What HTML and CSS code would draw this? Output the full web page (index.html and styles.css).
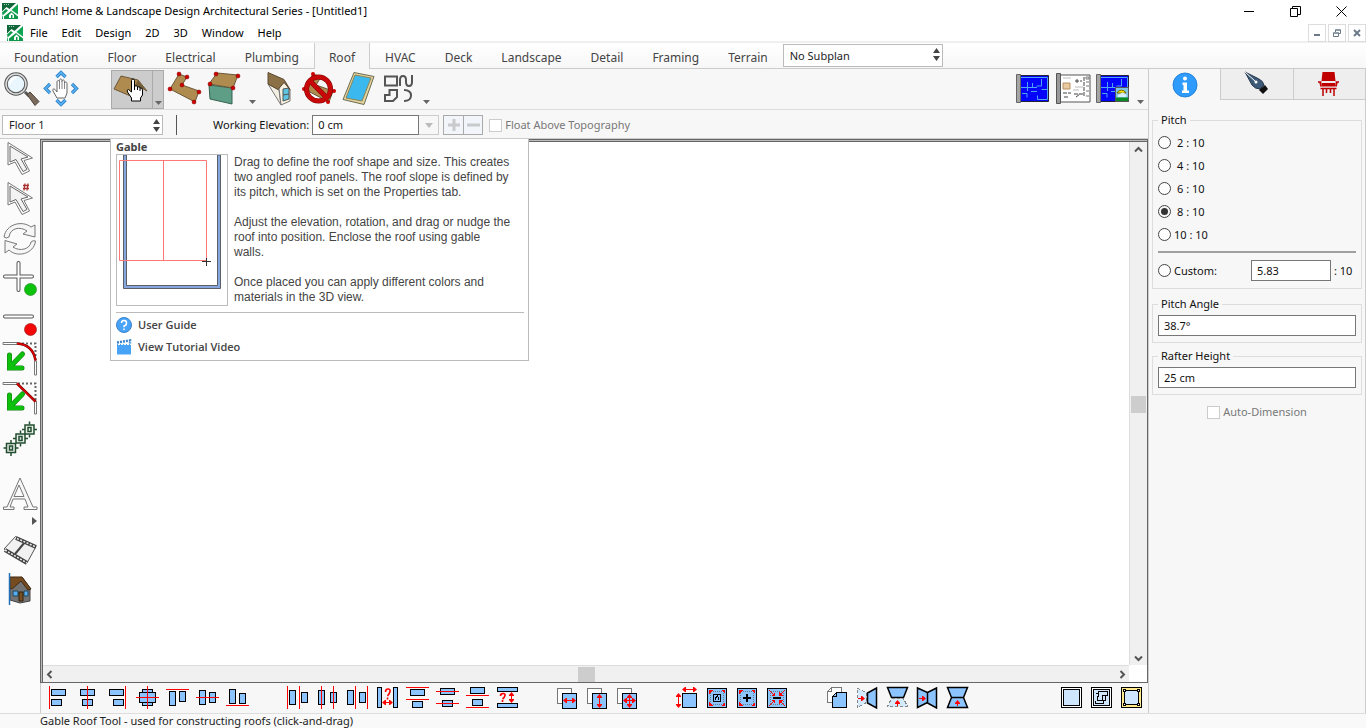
FILE: index.html
```html
<!DOCTYPE html>
<html lang="en">
<head>
<meta charset="utf-8">
<title>Punch! Home &amp; Landscape Design Architectural Series - [Untitled1]</title>
<link rel="stylesheet" href="styles.css">
</head>
<body>
<svg class="defs" aria-hidden="true">
  <symbol id="logo" viewBox="0 0 16 16"><rect width="16" height="16" fill="#fff"/><path d="M0 0h14L7.500 6 4.500 4 0 8.500z" fill="#11663a"/><path d="M2 1.500h6" stroke="#9fd0b4" stroke-dasharray="1 1"/><path d="M16 1v10.500L9.500 7z" fill="#0da552"/><path d="M2 16v-2.500L9 8l7 5.500V16z" fill="#0c9a4a"/><path d="M0 8.500V16h1L0 8.500zM0 9.500L4 6l2 1.500L0 13z" fill="#0c9a4a"/><path d="M7 15v-3l2.500-2.500L12 12v3z" fill="#fff"/><rect x="9" y="12" width="1.500" height="3" fill="#0c9a4a"/></symbol>
  <symbol id="updown" viewBox="0 0 7 13"><path d="M0 5l3.500-5L7 5zM0 8l3.500 5L7 8z" fill="#444"/></symbol>
  <symbol id="caret" viewBox="0 0 7 4"><path d="M0 0h7L3.500 4z" fill="#666"/></symbol>
  <symbol id="blueprint" viewBox="0 0 40 40"><path d="M7.500 6.500h28v26h-28z" fill="#0404fa" stroke="#223" stroke-width="1"/><path d="M8 8.500h26.500v22h-10v-4M8 18.500h16M14.500 13v9M19.500 18v-4M9 24.500h5v4M28.500 10v7h-5M28.500 20.500h6M18 22.500h6" fill="none" stroke="#4fa4f0" stroke-width="1"/><path d="M3.500 5.500h4v28h-4z" fill="#a5a5a5" stroke="#666"/></symbol>
  <symbol id="cursor" viewBox="0 0 40 40"><path d="M8 2.500V25l7-3 7 12.500 7.500-3.500-5.500-10.500 8.500-2.500z" fill="#fff" stroke="#777"/><path d="M10 6v16l6-2.500 7 12 4-2-6-10.500 7-2z" fill="#f3f3f3" stroke="#666"/></symbol>
  <marker id="arrow" viewBox="0 0 4 5" markerWidth="4" markerHeight="5" refX="3" refY="2.500" orient="auto-start-reverse" markerUnits="userSpaceOnUse"><path d="M0 0h1l3 2.500L1 5H0z" fill="#f00"/></marker>
</svg>

<header class="titlebar">
  <svg class="logo"><use href="#logo"/></svg>
  <h1>Punch! Home &amp; Landscape Design Architectural Series - [Untitled1]</h1>
  <div class="window-buttons">
    <button aria-label="Minimize"><svg width="11" height="11"><path d="M0 5.500h10" stroke="#000"/></svg></button>
    <button aria-label="Restore"><svg width="11" height="11"><path d="M.5 2.500h7v8h-7zM2.500 2.500v-2h8v8h-3" fill="none" stroke="#000"/></svg></button>
    <button aria-label="Close"><svg width="11" height="11"><path d="M.5.5l10 10M10.500.5l-10 10" stroke="#000"/></svg></button>
  </div>
</header>

<nav class="menubar">
  <svg class="logo"><use href="#logo"/></svg>
  <button>File</button><button>Edit</button><button>Design</button><button>2D</button><button>3D</button><button>Window</button><button>Help</button>
  <div class="doc-buttons">
    <button aria-label="Minimize document"><svg width="8" height="8"><path d="M1 6h6" stroke="#6c7a89" stroke-width="2"/></svg></button>
    <button aria-label="Restore document"><svg width="8" height="8"><path d="M.5 4h5v3.500h-5zM2.500 3V1h5v3.500h-2" fill="none" stroke="#6c7a89"/><path d="M0 4h6M2 1h6" stroke="#6c7a89"/></svg></button>
    <button aria-label="Close document"><svg width="8" height="8"><path d="M1 1l6 6M7 1L1 7" stroke="#6c7a89" stroke-width="2"/></svg></button>
  </div>
</nav>

<nav class="tabs">
  <button>Foundation</button><button>Floor</button><button>Electrical</button><button>Plumbing</button><button class="active">Roof</button><button>HVAC</button><button>Deck</button><button>Landscape</button><button>Detail</button><button>Framing</button><button>Terrain</button>
  <div class="select subplan"><select aria-label="Subplan"><option>No Subplan</option></select><svg><use href="#updown"/></svg></div>
</nav>

<div class="body">
<main class="left">
  <div class="toolbar">
    <button class="tool" aria-label="Zoom"><svg viewBox="0 0 40 40"><path d="M24 23l4 4" stroke="#555" stroke-width="3"/><path d="M26 25.500l3-2.500 9 9.500-4 4z" fill="#7b6b5d" stroke="#4c4037"/><circle cx="15" cy="15" r="10" fill="#eaf6fd" stroke="#555" stroke-width="3.500"/><circle cx="15" cy="15" r="10" fill="none" stroke="#ddd" stroke-width="1.500"/><path d="M9 15a6 6 0 0 1 6-6" fill="none" stroke="#fff" stroke-width="2"/></svg></button>
    <button class="tool" aria-label="Pan"><svg viewBox="0 0 40 40"><path d="M15.500 8l4.500-4.500L24.500 8M15.500 31l4.500 4.500 4.500-4.500M9 15l-4.500 4.500L9 24M31 15l4.500 4.500L31 24" fill="none" stroke="#2a7cc4" stroke-width="3.200"/><path d="M15.500 8l4.500-4.500L24.500 8M15.500 31l4.500 4.500 4.500-4.500M9 15l-4.500 4.500L9 24M31 15l4.500 4.500L31 24" fill="none" stroke="#5ab4f4" stroke-width="1.600"/><path d="M16 29l-4-7c-1-2 1-3 2.500-1l1.500 2V13c0-2 2.500-2 2.500 0v-1.500c0-2 2.500-2 2.500 0v1c0-2 2.500-2 2.500 0v2c0-2 2.500-2 2.500 0V24l-2 5z" fill="#fff" stroke="#666"/><path d="M18.500 13v7M21 12v8M23.500 14v6" stroke="#888"/></svg></button>
    <div class="split">
      <button class="tool" aria-label="Gable Roof Tool" aria-pressed="true"><svg viewBox="0 0 40 40"><path d="M2 20L9 7l17 4 9 11-5-3-9 9z" fill="#af8b50" stroke="#6b5838"/><path d="M26 11l-6 11 9-3 6 3z" fill="#75603a"/></svg></button>
      <button class="drop" aria-label="Roof tools"><svg><use href="#caret"/></svg></button>
    </div>
    <button class="tool" aria-label="Roof by boundary"><svg viewBox="0 0 40 40"><path d="M14 5l8 3-5 8 17 6-4 11L5 20z" fill="#af8b50" stroke="#6b5838"/><g fill="#c00" stroke="#800" stroke-width=".5"><circle cx="14" cy="5" r="2"/><circle cx="22" cy="8" r="2"/><circle cx="17" cy="16" r="2"/><circle cx="34" cy="23" r="2"/><circle cx="29" cy="33" r="2"/><circle cx="5" cy="20" r="2"/></g></svg></button>
    <button class="tool" aria-label="Roof plane"><svg viewBox="0 0 40 40"><path d="M4 16l23 3v16L5 30z" fill="#5e9d86" stroke="#356453"/><path d="M12 4l21 2-5 13-24-4z" fill="#af8b50" stroke="#6b5838"/><g fill="#c00" stroke="#800" stroke-width=".5"><circle cx="11" cy="5" r="2"/><circle cx="33" cy="7" r="2"/><circle cx="28" cy="19" r="2"/><circle cx="5" cy="15" r="2"/></g></svg></button>
    <button class="drop" aria-label="More roof tools"><svg><use href="#caret"/></svg></button>
    <button class="tool" aria-label="Dormer"><svg viewBox="0 0 40 40"><path d="M9 15l11 6 2 15z" fill="#f3efe2" stroke="#777"/><path d="M20 19l5-7 6 9v11l-9 4z" fill="#f5f1e0" stroke="#777"/><path d="M24 20l6-1v11l-6 2z" fill="#5cc3e0" stroke="#555"/><path d="M24 26l6-1" stroke="#555"/><path d="M9 3.500l16 7 6 10-6-7-6 7-10-5.500z" fill="#8b7045" stroke="#5a4a30"/></svg></button>
    <button class="tool" aria-label="Remove roof"><svg viewBox="0 0 40 40"><path d="M14 5l8 3-5 8 17 6-4 11L5 20z" fill="#af8b50" stroke="#6b5838"/><g fill="#c00"><circle cx="14" cy="5" r="2"/><circle cx="35" cy="22" r="2"/><circle cx="29" cy="33" r="2"/><circle cx="5" cy="20" r="2"/></g><circle cx="19.500" cy="20" r="12" fill="none" stroke="#7a0505" stroke-width="5"/><path d="M11 12l17 17" stroke="#7a0505" stroke-width="5"/><circle cx="19.500" cy="20" r="12" fill="none" stroke="#c80808" stroke-width="4"/><path d="M11 12l17 17" stroke="#c80808" stroke-width="4"/></svg></button>
    <button class="tool" aria-label="Skylight"><svg viewBox="0 0 40 40"><path d="M15 3.500l20 4-10 28-21-5z" fill="#e4d39c" stroke="#6b6b50"/><path d="M16 6l16 3-9 23-16-3z" fill="#3bb9ef" stroke="#8a8458"/></svg></button>
    <button class="tool" aria-label="Shapes"><svg viewBox="0 0 40 40"><path d="M6 7.500h12v9H6zM10.500 21h7.500v7l-4 4H6v-6h4.500zM21 17v-6q0-4 3-4t3 4v2q0 4 3 4t3-4V6M25 21q7 0 7 5.500T25 32" fill="none" stroke="#555" stroke-width="2"/></svg></button>
    <button class="drop" aria-label="More shapes"><svg><use href="#caret"/></svg></button>
    <div class="spacer"></div>
    <button class="tool" aria-label="2D plan"><svg><use href="#blueprint"/></svg></button>
    <button class="tool" aria-label="Construction drawing"><svg viewBox="0 0 40 40"><path d="M7 6h30v27H7z" fill="#fff" stroke="#555"/><path d="M10 14h7v6h-7z" fill="#e8c9a0" stroke="#b98e60"/><path d="M22 12h7M24 10v5M10 24h8M11 28h5M21 25h9M23 28l4-3M31 8v20" stroke="#444" stroke-width="1" stroke-dasharray="4 1"/><path d="M33 8v2h3V8zM33 13h3M33 17h3M33 22h3M33 27h3" stroke="#777" fill="none"/><path d="M10 9h8M22 18h8M20 21h6" stroke="#bbb"/><path d="M3.500 4.500h4v30h-4z" fill="#999" stroke="#555"/></svg></button>
    <button class="tool" aria-label="Plan and render"><svg viewBox="0 0 40 40"><use href="#blueprint"/><path d="M22.500 18.500h13v14h-13z" fill="#7fc3e6" stroke="#555"/><path d="M24 24a5 5 0 0 1 9 0z" fill="#ffe500" stroke="#7a6a00"/><path d="M25 28q-1-3 2-3 3-3 5 0 3 1 1 3z" fill="#d5eefa"/><path d="M23 28.500h12V32H23z" fill="#0a8a24"/></svg></button>
    <button class="drop" aria-label="More views"><svg><use href="#caret"/></svg></button>
  </div>

  <div class="options">
    <div class="select floor"><select aria-label="Floor"><option>Floor 1</option></select><svg><use href="#updown"/></svg></div>
    <div class="rule"></div>
    <label for="elev">Working Elevation:</label>
    <div class="combo"><input id="elev" type="text" value="0 cm"><button disabled aria-label="Elevations"><svg width="8" height="5"><path d="M0 0h8L4 5z" fill="#bbb"/></svg></button></div>
    <div class="stepper"><button disabled aria-label="Raise"><svg width="12" height="12"><path d="M0 6h12M6 0v12" stroke="#c8cacc" stroke-width="3"/></svg></button><button disabled aria-label="Lower"><svg width="13" height="12"><path d="M0 6h13" stroke="#c8cacc" stroke-width="3"/></svg></button></div>
    <label class="check"><input type="checkbox" disabled>Float Above Topography</label>
  </div>

  <div class="work">
    <aside class="palette">
      <button class="tool" aria-label="Select"><svg><use href="#cursor"/></svg></button>
      <button class="tool" aria-label="Select by number"><svg viewBox="0 0 40 40"><use href="#cursor"/><path d="M25 3.500l-1 7M28 3.500l-1 7M23 5.500h6M23 8.500h6" stroke="#a33" stroke-width="1.300" fill="none"/></svg></button>
      <button class="tool" aria-label="Rotate"><svg viewBox="0 0 40 40"><g fill="#f6f6f6" stroke="#777"><path d="M4 17C6 4 22 0 31 7l4-2v12l-12-3 4-3C20 6 10 8 9 17q-3 2-5 0z"/><path d="M35.500 21C34 34 17 38 9 30l-4 3V20.500L17 24l-4 3c7 5 17 2 18-5q2-2 4.500-1z"/></g></svg></button>
      <button class="tool" aria-label="Add point"><svg viewBox="0 0 40 40"><path d="M18.500 3v27M5 16.500h27" stroke="#555" stroke-width="4" stroke-linecap="round"/><path d="M18.500 3v27M5 16.500h27" stroke="#fff" stroke-width="2" stroke-linecap="round"/><circle cx="30.500" cy="29.500" r="6" fill="#0bc30b" stroke="#2a8a2a" stroke-width=".7"/></svg></button>
      <button class="tool" aria-label="Remove point"><svg viewBox="0 0 40 40"><path d="M5 16.500h27" stroke="#555" stroke-width="4" stroke-linecap="round"/><path d="M5 16.500h27" stroke="#fff" stroke-width="2" stroke-linecap="round"/><circle cx="30.500" cy="29.500" r="6" fill="#f40606" stroke="#992020" stroke-width=".7"/></svg></button>
      <button class="tool" aria-label="Fillet"><svg viewBox="0 0 40 40"><path d="M3 2.500h14v2H3zM34.500 21h2v14h-2z" fill="#fff" stroke="#777"/><path d="M18 3.500h17.500V21" fill="none" stroke="#666" stroke-width="2" stroke-dasharray="2 2"/><path d="M17 3.500q16 1 18.500 17" fill="none" stroke="#700" stroke-width="2.500"/><path d="M17 3.500q16 1 18.500 17" fill="none" stroke="#d00" stroke-width="1.500"/><path d="M22.500 14L10 27M9.500 15v13H22" fill="none" stroke="#187a18" stroke-width="5" stroke-linecap="round"/><path d="M22.500 14L10 27M9.500 15v13H22" fill="none" stroke="#0cc00c" stroke-width="4" stroke-linecap="round"/></svg></button>
      <button class="tool" aria-label="Chamfer"><svg viewBox="0 0 40 40"><path d="M3 2.500h14v2H3zM34.500 21h2v13h-2z" fill="#fff" stroke="#777"/><path d="M18 3.500h17.500V21" fill="none" stroke="#666" stroke-width="2" stroke-dasharray="2 2"/><path d="M17 3.500L35.500 21.500" stroke="#700" stroke-width="2.500"/><path d="M17 3.500L35.500 21.500" stroke="#d00" stroke-width="1.500"/><path d="M22.500 14L10 27M9.500 15v13H22" fill="none" stroke="#187a18" stroke-width="5" stroke-linecap="round"/><path d="M22.500 14L10 27M9.500 15v13H22" fill="none" stroke="#0cc00c" stroke-width="4" stroke-linecap="round"/></svg></button>
      <button class="tool" aria-label="Array"><svg viewBox="0 0 40 40"><g id="node" fill="#e9f2ea" stroke="#234d30" stroke-width="1.500"><path d="M6.500 23.500h9v9h-9z"/><path d="M9.500 26h3v4h-3zM11 20v3M11 33v3M3.500 28h3M15.500 28h3" fill="none"/></g><use href="#node" x="9.500" y="-9.500"/><use href="#node" x="18.500" y="-18.500"/></svg></button>
      <button class="tool text-tool" aria-label="Text"><svg viewBox="0 0 40 40"><path d="M20 3L33 32h4v2.500H24V32h4l-3-8H13l-3 8h4v2.500H3.500V32H7zM14 21.500h10L19 10z" fill="#f8f8f8" stroke="#777" stroke-linejoin="round"/></svg></button>
      <button class="more" aria-label="More text tools"><svg width="5" height="8"><path d="M0 0v8l5-4z" fill="#555"/></svg></button>
      <button class="tool" aria-label="Walkthrough"><svg viewBox="0 0 40 40"><path d="M15.500 6.500L36 16.500 27 33 4 19z" fill="#f1f1f1" stroke="#555" stroke-width="1"/><path d="M25 12L15 24" stroke="#444" stroke-width="2"/><path d="M5 20l22 13M16 8l20 9" stroke="#444" stroke-width="4"/><path d="M5 20l22 13M17 8.500l19 8.500" stroke="#eee" stroke-width="1.500" stroke-dasharray="2 1.500"/></svg></button>
      <button class="tool" aria-label="Elevation view"><svg viewBox="0 0 40 40"><path d="M10 15l12-8 8 11v13l-10 2-10-3z" fill="#737373" stroke="#444"/><path d="M10 7h12l9 12-3 1-7-9-9 8-2-1z" fill="#744c20" stroke="#432a10"/><path d="M13 21h5v5h-5zM24 21h4v5h-4z" fill="#55aef5" stroke="#245"/><path d="M19 22h4v9h-4z" fill="#795020" stroke="#321"/><path d="M9.500 3v32" stroke="#2470b8" stroke-width="1.500"/></svg></button>
    </aside>

    <div class="stage">
      <div class="viewport">
        <div class="canvas"></div>
        <div class="vscroll"><svg width="9" height="7"><path d="M1 5.500l3.500-3.500L8 5.500" class="chev"/></svg><i></i><svg width="9" height="7"><path d="M1 1.500L4.500 5 8 1.500" class="chev"/></svg></div>
        <div class="hscroll"><svg width="7" height="9"><path d="M5.500 1L2 4.500 5.500 8" class="chev"/></svg><i></i><svg width="7" height="9"><path d="M1.500 1L5 4.500 1.500 8" class="chev"/></svg></div>
        <div class="corner"></div>
      </div>
      <div class="align">
        <div class="group">
          <button aria-label="Align left"><svg><path class="r" d="M3.500 0v23"/><path class="b" d="M5.500 3.500h14v6h-14zM5.500 13.500h10v6h-10z"/></svg></button>
          <button aria-label="Align center"><svg><path class="b" d="M4.500 3.500h14v6h-14zM6.500 13.500h10v6h-10z"/><path class="r" d="M11.500 0v23"/></svg></button>
          <button aria-label="Align right"><svg><path class="r" d="M19.500 0v23"/><path class="b" d="M3.500 3.500h14v6h-14zM7.500 13.500h10v6h-10z"/></svg></button>
          <button aria-label="Align centers"><svg><path class="b" d="M6.500 3.500h10v16h-10z"/><path class="b" d="M3.500 6.500h16v10h-16z"/><path class="r" d="M11.500 0v23M0 11.500h23"/></svg></button>
          <button aria-label="Align top"><svg><path class="r" d="M0 3.500h23"/><path class="b" d="M3.500 5.500h6v14h-6zM13.500 5.500h6v10h-6z"/></svg></button>
          <button aria-label="Align middle"><svg><path class="b" d="M3.500 4.500h6v14h-6zM13.500 6.500h6v10h-6z"/><path class="r" d="M0 11.500h23"/></svg></button>
          <button aria-label="Align bottom"><svg><path class="r" d="M0 19.500h23"/><path class="b" d="M3.500 3.500h6v14h-6zM13.500 7.500h6v10h-6z"/></svg></button>
        </div>
        <div class="group">
          <button aria-label="Distribute left edges"><svg><path class="r" d="M1.500 0v23M13.500 0v23"/><path class="b" d="M3.500 4.500h6v14h-6zM15.500 6.500h6v10h-6z"/></svg></button>
          <button aria-label="Distribute centers horizontally"><svg><path class="b" d="M2.500 4.500h6v14h-6zM14.500 6.500h6v10h-6z"/><path class="r" d="M5.500 0v23M17.500 0v23"/></svg></button>
          <button aria-label="Distribute right edges"><svg><path class="b" d="M1.500 4.500h6v14h-6zM13.500 6.500h6v10h-6z"/><path class="r" d="M9.500 0v23M21.500 0v23"/></svg></button>
          <button aria-label="Space horizontally"><svg><path class="b" d="M1.500 1.500h4v20h-4zM17.500 1.500h4v20h-4z"/><path class="r" d="M7 16.500h9" marker-start="url(#arrow)" marker-end="url(#arrow)"/><path class="r q" d="M9.500 6q0-3 2.500-3t2 2.500T11.500 10M11.500 11.500v2"/></svg></button>
          <button aria-label="Distribute top edges"><svg><path class="r" d="M0 1.500h23M0 13.500h23"/><path class="b" d="M4.500 3.500h14v6h-14zM6.500 15.500h10v6h-10z"/></svg></button>
          <button aria-label="Distribute centers vertically"><svg><path class="b" d="M4.500 2.500h14v6h-14zM6.500 14.500h10v6h-10z"/><path class="r" d="M0 5.500h23M0 17.500h23"/></svg></button>
          <button aria-label="Distribute bottom edges"><svg><path class="b" d="M4.500 1.500h14v6h-14zM6.500 13.500h10v6h-10z"/><path class="r" d="M0 9.500h23M0 21.500h23"/></svg></button>
          <button aria-label="Space vertically"><svg><path class="b" d="M1.500 1.500h20v4h-20zM1.500 17.500h20v4h-20z"/><path class="r" d="M15.500 7v9" marker-start="url(#arrow)" marker-end="url(#arrow)"/><path class="r q" d="M4.500 10q0-2.500 2.500-2.500T9 9.500 6.500 13M6.500 14v2"/></svg></button>
        </div>
        <div class="group">
          <button aria-label="Same width"><svg><path class="g" d="M1.500 2.500h14v15h-14z"/><path class="b" d="M6.500 7.500h14v15h-14z"/><path class="r" d="M8 14.500h11" marker-start="url(#arrow)" marker-end="url(#arrow)"/></svg></button>
          <button aria-label="Same height"><svg><path class="g" d="M1.500 2.500h14v15h-14z"/><path class="b" d="M6.500 7.500h14v15h-14z"/><path class="r" d="M13.500 9v12" marker-start="url(#arrow)" marker-end="url(#arrow)"/></svg></button>
          <button aria-label="Same size"><svg><path class="g" d="M1.500 2.500h14v15h-14z"/><path class="b" d="M6.500 7.500h14v15h-14z"/><path class="r" d="M8 14.500h11" marker-start="url(#arrow)" marker-end="url(#arrow)"/><path class="r" d="M13.500 9v12" marker-start="url(#arrow)" marker-end="url(#arrow)"/></svg></button>
        </div>
        <div class="group">
          <button aria-label="Set size"><svg><path class="b" d="M6.500 7.500h14v14h-14z"/><path class="r" d="M7 3.500h13" marker-start="url(#arrow)" marker-end="url(#arrow)"/><path class="r" d="M2.500 8v13" marker-start="url(#arrow)" marker-end="url(#arrow)"/></svg></button>
          <button aria-label="Scale text"><svg><path class="b" d="M1.500 2.500h19v19h-19z"/><path class="d" d="M4.500 5.500h13v13h-13z"/><path class="k" d="M7.500 8.500h7v7h-7zM9.500 14v-2l2-2 1 2v2"/><path class="f" d="M3 4h4L3 8zM19 4h-4l4 4zM3 20h4l-4-4zM19 20h-4l4-4z"/></svg></button>
          <button aria-label="Scale up"><svg><path class="b" d="M1.500 2.500h19v19h-19z"/><path class="d" d="M4.500 5.500h13v13h-13z"/><path class="k w" d="M7 12h8M11 8v8"/><path class="f" d="M3 4h4L3 8zM19 4h-4l4 4zM3 20h4l-4-4zM19 20h-4l4-4z"/></svg></button>
          <button aria-label="Scale down"><svg><path class="b" d="M1.500 2.500h19v19h-19z"/><path class="d" d="M4.500 5.500h13v13h-13z"/><path class="k w" d="M7 12h8"/><path class="r" d="M3 4l4 4M19 4l-4 4M3 20l4-4M19 20l-4-4"/><path class="f" d="M9 6v4H5zM13 6v4h4zM9 18v-4H5zM13 18v-4h4z"/></svg></button>
        </div>
        <div class="group">
          <button aria-label="Duplicate"><svg><path class="g" d="M5.500 1.500h10v15h-14V5.500zM5.500 1.500v4h-4"/><path class="b" d="M10.500 6.500h10v15h-14v-11zM10.500 6.500v4h-4"/></svg></button>
          <button aria-label="Mirror left"><svg><path class="p" d="M1.500 2.500l9 4v10l-9 5z"/><path class="b s" d="M11.500 7l9-5v20l-9-5z"/><path class="r" d="M2 12.500h6" marker-end="url(#arrow)"/></svg></button>
          <button aria-label="Mirror up"><svg><path class="b s" d="M1.500 1.500h20l-4 10h-12z"/><path class="p" d="M5.500 12.500h12l4 8h-20z"/><path class="r" d="M11.500 20v-5" marker-end="url(#arrow)"/></svg></button>
          <button aria-label="Flip horizontal"><svg><path class="b s" d="M1.500 2l10 4.500v10l-10 5zM11.500 6.500l9-4.500v20l-9-5z"/><path class="r" d="M3 12.500h6" marker-end="url(#arrow)"/></svg></button>
          <button aria-label="Flip vertical"><svg><path class="b s" d="M1.500 1.500h20l-4 10h-12zM5.500 11.500h12l4 10h-20z"/><path class="r" d="M11.500 20v-5" marker-end="url(#arrow)"/></svg></button>
        </div>
        <div class="group end">
          <button aria-label="Page"><svg><path class="k v" d="M1.500 1.500h20v20h-20z"/><path class="k l" d="M3.500 3.500h16v16h-16z"/></svg></button>
          <button aria-label="Fit plan"><svg><path class="k v" d="M1.500 1.500h20v20h-20z"/><path class="k l" d="M3.500 3.500h16v16h-16z"/><path class="k" d="M5.500 7.500h3v-2h9v4h-2v5h-2v3h-8v-3M8.500 7.500v3h-1v4h5v-5h3"/></svg></button>
          <button aria-label="Fit selection"><svg><path class="k y" d="M1.500 1.500h20v20h-20z"/><path class="k l" d="M4.500 4.500h14v14h-14z"/><path class="k v" d="M3.500 3.500h2v2h-2zM17.500 3.500h2v2h-2zM3.500 17.500h2v2h-2zM17.500 17.500h2v2h-2z"/></svg></button>
        </div>
      </div>
    </div>

    <section class="tip" role="tooltip">
      <h2>Gable</h2>
      <div class="tip-body">
        <svg class="diagram" viewBox="0 0 110 150"><path d="M6.500 0v133.500h97V0h-3v130.500h-91V0z" fill="#86a6de" stroke="#5a5f68"/><path d="M2.500 5.500h87v100h-87zM46.500 5.500v100" fill="none" stroke="#f77"/><path d="M89.500 103v8M85 106.500h9" stroke="#333"/></svg>
        <div class="tip-text">
          <p>Drag to define the roof shape and size. This creates<br>two angled roof panels. The roof slope is defined by<br>its pitch, which is set on the Properties tab.</p>
          <p>Adjust the elevation, rotation, and drag or nudge the<br>roof into position. Enclose the roof using gable<br>walls.</p>
          <p>Once placed you can apply different colors and<br>materials in the 3D view.</p>
        </div>
      </div>
      <div class="tip-links">
        <a href="#guide"><svg viewBox="0 0 16 16"><circle cx="8" cy="8" r="7.500" fill="#48a3f7" stroke="#3a85cc"/><path d="M5.500 6q0-2.500 2.500-2.500T10.500 6 8 9v1.200M8 11.500v1.500" fill="none" stroke="#fff" stroke-width="1.500"/></svg>User Guide</a>
        <a href="#video"><svg viewBox="0 0 16 16"><path d="M1 5h14v10.500H1z" fill="#48a3f7"/><path d="M1 3.500L14 1.500v3" fill="none" stroke="#3a85cc" stroke-width="2.500" stroke-dasharray="2 1"/><path d="M2 5.500h13" stroke="#fff" stroke-width="1" stroke-dasharray="2 1"/></svg>View Tutorial Video</a>
      </div>
    </section>
    <svg class="pointer" viewBox="0 0 18 24" aria-hidden="true"><path d="M5.500 14V2.500q0-1.500 1.500-1.500t1.500 1.500V8q3-1 3 1 2.500-1 2.500 1 2.500-.5 2.500 2v5l-2 3v3h-9v-3l-4-6q-1-2.500 1-2.500z" fill="#fff" stroke="#000"/><path d="M8.500 8v4M11.500 9v3M14 10v3" stroke="#000"/></svg>
  </div>
</main>

<aside class="panel">
  <div class="panel-tabs">
    <button class="active" aria-label="Properties"><svg viewBox="0 0 26 26"><circle cx="13" cy="13" r="12" fill="#2f9bfd" stroke="#2583d8"/><circle cx="13" cy="6.500" r="2" fill="#fff"/><path d="M10.500 10.500h4.500v8h2v2.500h-7v-2.500h1.500v-5.500h-1z" fill="#fff"/></svg></button>
    <button aria-label="Pen"><svg viewBox="0 0 26 26"><path d="M1 1l14 7q4 2 5 6l-4 4q-5 0-8-4z" fill="#3d5a78" stroke="#24374c"/><path d="M1 1l10 9" stroke="#fff"/><circle cx="12" cy="11" r="1.500" fill="#fff"/><path d="M15 19l6-5 3 4-5 5z" fill="#111"/></svg></button>
    <button aria-label="Objects"><svg viewBox="0 0 26 26"><path d="M6.500 1h12l1 9h-14zM5.500 12h14v3.500h-14z" fill="#c00000"/><path d="M2 11h3.500M19.500 11H23M4 11l1 4.500M21 11l-1 4.500M4.500 17.500h16M7 17v8M18 17v8M10.500 18v4M14.500 18v4" fill="none" stroke="#c00000" stroke-width="1.500"/></svg></button>
  </div>
  <form class="props">
    <fieldset class="pitch">
      <legend>Pitch</legend>
      <label class="indent"><input type="radio" name="pitch">2 : 10</label>
      <label class="indent"><input type="radio" name="pitch">4 : 10</label>
      <label class="indent"><input type="radio" name="pitch">6 : 10</label>
      <label class="indent"><input type="radio" name="pitch" checked>8 : 10</label>
      <label><input type="radio" name="pitch">10 : 10</label>
      <hr>
      <div class="custom"><label><input type="radio" name="pitch">Custom:</label><input type="text" value="5.83" aria-label="Custom pitch"><span>: 10</span></div>
    </fieldset>
    <fieldset><legend>Pitch Angle</legend><input type="text" value="38.7°" aria-label="Pitch angle"></fieldset>
    <fieldset><legend>Rafter Height</legend><input type="text" value="25 cm" aria-label="Rafter height"></fieldset>
    <label class="check auto"><input type="checkbox" disabled>Auto-Dimension</label>
  </form>
</aside>
</div>

<footer class="status">Gable Roof Tool - used for constructing roofs (click-and-drag)</footer>
</body>
</html>
```
FILE: styles.css
```css
* { box-sizing: border-box; }
body { margin: 0; height: 100vh; display: flex; flex-direction: column; overflow: hidden; background: #fff; color: #111; font: 11px/16px "Noto Sans", "Open Sans", sans-serif; }
button, input, select { font: inherit; color: inherit; margin: 0; }
button { border: 0; padding: 0; background: none; display: flex; align-items: center; justify-content: center; }
svg { display: block; }
h1, h2, p { margin: 0; font: inherit; }
.defs { position: absolute; width: 0; height: 0; }
.logo { width: 16px; height: 16px; flex: none; }

.titlebar { height: 22px; flex: none; display: flex; align-items: center; padding-left: 2px; gap: 5px; color: #000; }
.window-buttons { margin-left: auto; display: flex; height: 100%; padding-right: 2px; }
.window-buttons button { width: 46px; }
.menubar { height: 21px; flex: none; display: flex; align-items: center; padding: 2px 0 0 7px; color: #000; border-bottom: 2px solid #efefef; }
.menubar > button { padding: 0 7px; }
.doc-buttons { margin-left: auto; display: flex; gap: 2px; }
.doc-buttons button { width: 18px; height: 18px; border: 1px solid #ddd; }
.tabs { height: 26px; flex: none; display: flex; gap: 1px; background: linear-gradient(#fff, #f7f7f7); border-bottom: 1px solid #ccc; font-size: 12px; color: #444; }
.tabs > button { padding: 4px 14px 0; }
.tabs > .active { background: #f7f7f7; border: solid #ccc; border-width: 0 1px; margin-bottom: -1px; padding-bottom: 1px; }
.select { position: relative; font-size: 11px; color: #222; }
.select select { appearance: none; width: 100%; height: 100%; padding: 0 6px; border: 1px solid #bbb; border-radius: 0; background: #fff; }
.select svg { position: absolute; right: 3px; top: 4px; width: 7px; height: 13px; pointer-events: none; }
.subplan { width: 160px; height: 23px; margin-top: 1px; }

.body { flex: 1; display: flex; min-height: 0; background: #f7f7f7; }
.left { flex: 1; min-width: 0; display: flex; flex-direction: column; }
.toolbar { height: 41px; flex: none; display: flex; align-items: center; padding: 0 1px; border-bottom: 1px solid #ddd; }
.tool, .tool svg { width: 40px; height: 40px; }
.drop { width: 14px; height: 40px; align-items: flex-end; padding-bottom: 5px; }
.drop svg { width: 7px; height: 4px; }
.split { display: flex; height: 39px; margin: 0 1px 0 30px; background: #ccc; border: 1px solid #aaa; }
.split .tool, .split .drop { height: 37px; }
.split .drop { width: 11px; border-left: 1px solid #aaa; padding-bottom: 3px; }
.spacer { flex: 1; }
.options { height: 29px; flex: none; display: flex; align-items: center; padding: 2px 0 0 2px; border-bottom: 1px solid #ccc; }
.floor { width: 161px; height: 20px; }
.rule { width: 1px; height: 20px; background: #555; margin: 0 36px 0 13px; }
.combo { display: flex; margin-left: 3px; height: 20px; }
.combo input { width: 107px; border: 1px solid #777; padding: 0 5px; background: #fff; }
.combo button { width: 20px; border: 1px solid #ccc; border-left: 0; }
.stepper { display: flex; margin: 0 6px 0 4px; height: 20px; border: 1px solid #aaa; background: #f2f5fa; }
.stepper button { width: 19px; }
.stepper button + button { border-left: 1px solid #aaa; }
.check { display: flex; align-items: center; gap: 3px; color: #777; }
.check input { appearance: none; width: 13px; height: 13px; border: 1px solid #ccc; background: #fff; }

.work { position: relative; flex: 1; min-height: 0; display: flex; }
.palette { width: 40px; flex: none; background: #fbfbfb; padding-top: 1px; }
.text-tool { margin-top: 15px; }
.more { width: 40px; height: 15px; padding: 0 3px 3px 0; justify-content: flex-end; }
.stage { flex: 1; min-width: 0; display: flex; flex-direction: column; }
.viewport { flex: 1; min-height: 0; display: grid; grid-template: 1fr 17px / 1fr 18px; background: #bbb; border: 1px solid #666; border-width: 3px 1px 1px 3px; border-style: double solid solid double; }
.canvas, .corner { background: #fff; }
.vscroll { display: flex; flex-direction: column; align-items: center; justify-content: space-between; padding: 4px 1px 3px 0; border-left: 1px solid #ddd; background: #f0f0f0; }
.hscroll { display: flex; align-items: center; justify-content: space-between; padding: 0 3px; border-top: 1px solid #ddd; background: #f0f0f0; }
.vscroll i { width: 15px; height: 17px; background: #cdcdcd; }
.hscroll i { width: 17px; height: 15px; background: #cdcdcd; }
.chev { fill: none; stroke: #555; stroke-width: 2; }
.align { height: 30px; flex: none; display: flex; align-items: center; gap: 36px; padding: 0 4px 0 5px; border-left: 1px solid #ccc; }
.group { display: flex; gap: 6px; }
.group.end { margin-left: auto; }
.group button, .group svg { width: 24px; height: 24px; }
.group svg { shape-rendering: crispEdges; }
.b { fill: #8cc4ff; stroke: #000; }
.s { stroke-width: 1.5; shape-rendering: auto; }
.r { fill: none; stroke: #f00; }
.q { stroke-width: 1.6; shape-rendering: auto; }
.f { fill: #f00; }
.g { fill: #fff; stroke: #777; }
.d { fill: none; stroke: #678; stroke-dasharray: 1 1; }
.k { fill: none; stroke: #000; }
.w { stroke-width: 2; }
.v { fill: #fff; }
.l { fill: #cfe6ff; }
.y { fill: #ffe98a; }
.p { fill: #d3eaff; stroke: #888; stroke-dasharray: 3 2; }

.tip { position: absolute; left: 110px; top: 0; width: 419px; padding: 0 4px 2px 5px; background: #fff; border: 1px solid #bbb; border-top: 0; color: #444; }
.tip h2 { font-weight: bold; line-height: 15px; }
.tip-body { display: flex; gap: 6px; padding-bottom: 6px; border-bottom: 1px solid #bbb; }
.diagram { width: 112px; height: 152px; flex: none; border: 1px solid #bbb; }
.tip-text { padding-top: 1px; font: 12px/15px "Liberation Sans", Arial, sans-serif; white-space: nowrap; }
.tip-text p + p { margin-top: 15px; }
.tip-links { padding-top: 1px; font-family: "Open Sans", "Noto Sans", sans-serif; }
.tip-links a { display: flex; align-items: center; gap: 6px; height: 22px; color: inherit; text-decoration: none; font-weight: 600; }
.tip-links svg { width: 16px; height: 16px; }
.pointer { position: absolute; left: 126px; top: -61px; width: 18px; height: 24px; pointer-events: none; }

.panel { width: 218px; flex: none; border: solid #ccc; border-width: 0 1px; }
.panel-tabs { display: flex; height: 31px; }
.panel-tabs button { flex: 1; background: #eee; border: solid #ccc; border-width: 0 0 1px 1px; }
.panel-tabs .active { background: none; border: 0; }
.panel-tabs svg { width: 26px; height: 26px; }
.props { padding: 12px 3px 0; }
fieldset { margin: 0 0 5px; min-width: 0; border: 1px solid #ddd; padding: 3px 5px 6px; }
legend { padding: 0 3px; }
fieldset > input[type="text"] { width: 100%; }
.props input[type="text"] { display: block; height: 21px; border: 1px solid #777; padding: 0 5px; background: #fff; }
.pitch { margin-bottom: 7px; }
.pitch label { display: flex; align-items: center; gap: 3px; height: 23px; }
.pitch .indent { gap: 6px; }
input[type="radio"] { appearance: none; width: 13px; height: 13px; border: 1px solid #444; border-radius: 50%; background: #fff; padding: 2px; }
input[type="radio"]:checked { background: #333 content-box; }
hr { border: 0; height: 2px; margin: 5px 0 6px; background: #a0a0a0; }
.custom { display: flex; align-items: center; gap: 3px; }
.custom label { width: 90px; }
.custom input[type="text"] { width: 80px; }
.auto { justify-content: center; padding-top: 4px; }
.status { height: 15px; flex: none; padding-left: 40px; border-top: 1px solid #ddd; background: #f9f9f9; line-height: 13px; white-space: nowrap; color: #222; }
```
